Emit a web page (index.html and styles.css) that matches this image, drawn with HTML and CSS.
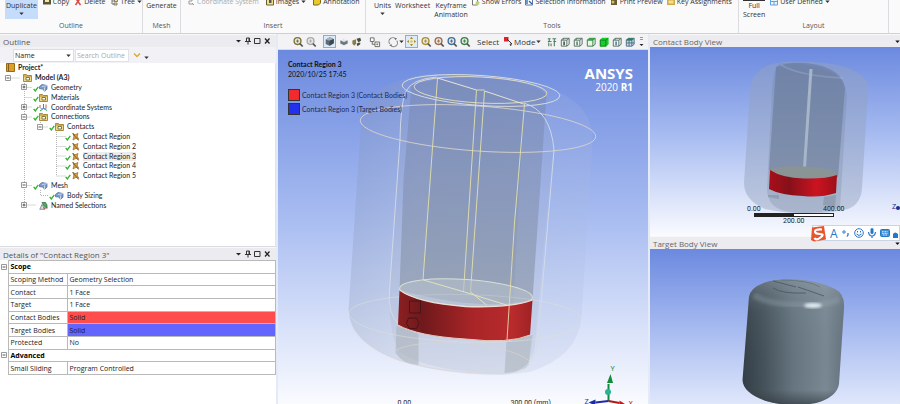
FILE: index.html
```
<!DOCTYPE html>
<html lang="en">
<head>
<meta charset="utf-8">
<title>Mechanical - Contact Region 3</title>
<link rel="stylesheet" href="styles.css">
</head>
<body>
<svg class="defs" aria-hidden="true">
  <defs>
    <symbol id="lens" viewBox="0 0 13 13"><circle cx="6" cy="5.5" r="3.7" fill="#e9e9e2" stroke="currentColor" stroke-width="1.5"/><path d="M4.300 5.500h3.400M6 3.800v3.400" stroke="currentColor"/><path d="M8.600 8.200l3 3.200" stroke="#555" stroke-width="1.800"/></symbol>
    <symbol id="cube" viewBox="0 0 13 13"><path d="M2 4L7 1.500l4.500 1.900v5.300L6.600 11.500 2 9.500z" fill="#5d6a73"/><path d="M2 4L7 1.500l4.500 1.900-4.900 2.200z" fill="#a6b2ba"/><path d="M6.600 5.600v5.900l4.900-2.800V3.400z" fill="#3c474f"/></symbol>
    <symbol id="wire" viewBox="0 0 13 13"><path d="M2.500 4.500h6v6.500h-6zM4.500 2.500h6.500v6.500l-2.500 2M2.500 4.500l2-2M8.500 4.500L11 2.500M4.500 2.500v2" fill="none" stroke="#50705c"/><path d="M5.500 6v4" stroke="currentColor" stroke-width="1.500"/></symbol>
    <symbol id="tick" viewBox="0 0 6 9"><path d="M.7 5.800L2.300 8 5.300 3.800" fill="none" stroke="#35b12f" stroke-width="1.300"/></symbol>
    <symbol id="plus" viewBox="0 0 8 8"><path d="M1.500 1.500h5v5h-5z" fill="#fff" stroke="#999"/><path d="M2.500 4h3M4 2.500v3" stroke="#333" stroke-width=".8"/></symbol>
    <symbol id="minus" viewBox="0 0 8 8"><path d="M1.500 1.500h5v5h-5z" fill="#fff" stroke="#999"/><path d="M2.500 4h3" stroke="#333" stroke-width=".8"/></symbol>
    <symbol id="folder" viewBox="0 0 9 9"><path d="M.5 1.500h3l1 1h4v6h-8z" fill="#f1da84" stroke="#927427" stroke-width=".8"/><path d="M1 3h7" stroke="#a78529"/><path d="M3 4.500h3.500v2.500H3z" fill="#fff" stroke="#655a32" stroke-width=".8"/></symbol>
    <symbol id="solid" viewBox="0 0 9 9"><path d="M.5 3.500L3 1.500l5 1v3.700L5.500 8.200 3.800 6 .5 5.700z" fill="#7f9ed0" stroke="#44618e" stroke-width=".7"/><path d="M3 3.500l5-.9M5.500 8V4.500" stroke="#e5edfa" stroke-width=".7"/></symbol>
    <symbol id="axes" viewBox="0 0 9 9"><path d="M4.500 1v4.500L8 7.500M4.500 5.500L1 8" fill="none" stroke="#31a24c"/><path d="M1 2v3M7 1.500v3.500" stroke="#c34a44" stroke-width=".9"/><path d="M1.500 5.500h6" stroke="#5787c8" stroke-width=".7"/></symbol>
    <symbol id="contact" viewBox="0 0 9 9"><path d="M2 1.500l2 1.200L7 1.500 6.300 4.200 7.800 7.500 5 6.300 2 8l.8-3.500z" fill="#d6a23d" stroke="#8a5d22" stroke-width=".6"/><path d="M1.500 1l6 7.500" stroke="#7d5019" stroke-width=".8"/></symbol>
    <symbol id="named" viewBox="0 0 9 9"><path d="M.8 8.300L3 3.500l3 4.800z" fill="#d5e2f4" stroke="#777" stroke-width=".8"/><path d="M3 1.500h3.500L8 4v3L5 5z" fill="#45b15a" stroke="#276835" stroke-width=".7"/><path d="M4 7h4.500" stroke="#c54545"/></symbol>
    <symbol id="down" viewBox="0 0 5 5"><path d="M.3 1.500h4.400L2.500 4z" fill="currentColor"/></symbol>
    <symbol id="win" viewBox="0 0 36 10"><path d="M0 4h5L2.500 6.500z" fill="#222"/><path d="M10.500 2h3v3.500h-3zM9 5.500h6M12 5.500v3M13 2v3" fill="none" stroke="#333"/><path d="M18.500 2.500h5.500v5h-5.500z" fill="none" stroke="#333"/><path d="M29 2.500l4.500 5M33.500 2.500L29 7.500" stroke="#222" stroke-width="1.300"/></symbol>
    <linearGradient id="steel"><stop offset="0" stop-color="#333e46"/><stop offset=".22" stop-color="#46535c"/><stop offset=".5" stop-color="#667580"/><stop offset=".82" stop-color="#7a8994"/><stop offset="1" stop-color="#66747f"/></linearGradient>
    <linearGradient id="shade" x1="0" y1="0" x2="0" y2="1"><stop offset="0" stop-color="#a4b1bb" stop-opacity=".4"/><stop offset=".25" stop-color="#8796a1" stop-opacity=".1"/><stop offset=".88" stop-color="#333" stop-opacity="0"/><stop offset="1" stop-color="#263038" stop-opacity=".6"/></linearGradient>
    <linearGradient id="red"><stop offset="0" stop-color="#8c1f22"/><stop offset=".18" stop-color="#6f191c"/><stop offset=".55" stop-color="#a82527"/><stop offset=".85" stop-color="#b92b2d"/><stop offset="1" stop-color="#9d2225"/></linearGradient>
    <linearGradient id="red2"><stop offset="0" stop-color="#a80f19"/><stop offset=".3" stop-color="#86101a"/><stop offset=".7" stop-color="#cb1420"/><stop offset="1" stop-color="#9d0f19"/></linearGradient>
    <linearGradient id="glass"><stop offset="0" stop-color="#7f8fae" stop-opacity=".26"/><stop offset=".3" stop-color="#a3afc4" stop-opacity=".22"/><stop offset="1" stop-color="#a9b9de" stop-opacity=".2"/></linearGradient>
    <linearGradient id="core" x1="0" y1="0" x2="0" y2="1"><stop offset="0" stop-color="#69779c" stop-opacity=".3"/><stop offset="1" stop-color="#7d8894" stop-opacity=".5"/></linearGradient>
    <filter id="soft"><feGaussianBlur stdDeviation="1.500"/></filter>
  </defs>
</svg>

<header class="ribbon">
  <section class="group group-outline">
    <div class="tools">
      <button class="big active"><span>Duplicate</span><svg class="caret"><use href="#down"/></svg></button>
      <button class="small"><svg class="ic" viewBox="0 0 8 8"><path d="M0 0h8v6.500H0z" fill="#5e5437"/><path d="M2 1h4v3H2z" fill="#f2e7ae"/></svg>Copy</button>
      <button class="small"><svg class="ic" viewBox="0 0 8 8"><path d="M1.500 0l5 7M6.500 0l-5 7" stroke="#d94a42" stroke-width="1.500"/></svg>Delete</button>
      <button class="small"><svg class="ic" viewBox="0 0 8 8"><path d="M0 1h3M2 1v5h2M2 3h3" fill="none" stroke="#777"/><path d="M4.500 1.500h3v2h-3zM4 5h3v2H4z" fill="#f1e6a0" stroke="#555" stroke-width=".7"/></svg>Tree<svg class="caret"><use href="#down"/></svg></button>
    </div>
    <h2>Outline</h2>
  </section>
  <section class="group group-mesh">
    <div class="tools"><button class="big"><span>Generate</span></button></div>
    <h2>Mesh</h2>
  </section>
  <section class="group group-insert">
    <div class="tools">
      <button class="small" disabled><svg class="ic" viewBox="0 0 8 8"><path d="M1 1h4v2H2v3h4M5 5l2 2" fill="none" stroke="#999"/></svg>Coordinate System</button>
      <button class="small"><svg class="ic" viewBox="0 0 8 8"><path d="M.5 0h7v7h-7z" fill="#efe08b" stroke="#696039"/><path d="M3 2h2.500v3H3z" fill="#555"/></svg>Images<svg class="caret"><use href="#down"/></svg></button>
      <button class="small"><svg class="ic" viewBox="0 0 8 8"><path d="M.5 0h7v5l-2 2h-5z" fill="#e8c82b" stroke="#7c6b20"/></svg>Annotation</button>
    </div>
    <h2>Insert</h2>
  </section>
  <section class="group group-tools">
    <div class="tools">
      <button class="big"><span>Units</span><svg class="caret"><use href="#down"/></svg></button>
      <button class="big"><span>Worksheet</span></button>
      <button class="big"><span>Keyframe<br>Animation</span></button>
      <button class="small"><svg class="ic" viewBox="0 0 8 8"><path d="M.5 0h5v7h-5z" fill="#fff" stroke="#777"/><circle cx="5.500" cy="5" r="2" fill="#b8d17b"/></svg>Show Errors</button>
      <button class="small"><svg class="ic" viewBox="0 0 8 8"><path d="M.5 0h7v7h-7z" fill="#fff" stroke="#5979a5"/><path d="M2 1v5M4 3l3 3" stroke="#2367aa" stroke-width="1.300"/></svg>Selection Information</button>
      <button class="small"><svg class="ic" viewBox="0 0 8 8"><path d="M1 2h6v5H1z" fill="#655d3b"/><circle cx="3" cy="4" r="1.500" fill="#d9bf4b"/></svg>Print Preview</button>
      <button class="small"><svg class="ic" viewBox="0 0 8 8"><path d="M0 1h8v6H0z" fill="#d2a948"/><path d="M1.500 2.500h5v3h-5z" fill="#f5dd93"/></svg>Key Assignments</button>
    </div>
    <h2>Tools</h2>
  </section>
  <section class="group group-layout">
    <div class="tools">
      <button class="big monitor"><span>Full<br>Screen</span></button>
      <button class="small"><svg class="ic" viewBox="0 0 8 8"><path d="M.5 0h7v7h-7zM.5 3.500h7M4 3.500V7" fill="#e9f4ff" stroke="#5fa3e0"/></svg>User Defined<svg class="caret"><use href="#down"/></svg></button>
    </div>
    <h2>Layout</h2>
  </section>
</header>

<main class="workspace">
  <aside class="left">
    <section class="panel outline">
      <div class="title"><h3>Outline</h3><svg class="win"><use href="#win"/></svg></div>
      <div class="filter">
        <div class="pick"><select aria-label="Filter by"><option>Name</option></select><svg class="caret"><use href="#down"/></svg></div>
        <input type="text" aria-label="Search Outline" placeholder="Search Outline">
        <svg class="chev" viewBox="0 0 8 6"><path d="M1 1.500L4 4.500 7 1.500" fill="none" stroke="#dcaa2f" stroke-width="1.500"/></svg>
        <svg class="caret more"><use href="#down"/></svg>
      </div>
      <div class="treebox">
        <svg class="lines" viewBox="0 0 276 147" aria-hidden="true"><path d="M8.500 15h12M24.500 20v122M24.500 24.500h8M24.500 34.500h8M24.500 44h8M24.500 54h8M24.500 122.500h8M24.500 142h12M40.500 59v4M40.500 64h8M56.500 69v44M56.500 73.500h9M56.500 83.500h9M56.500 93h9M56.500 103h9M56.500 113h9M40.500 127v5.500h8" fill="none" stroke="#b5b5b5" stroke-dasharray="1 1"/></svg>
        <ul class="tree">
          <li class="root"><svg class="ti" viewBox="0 0 9 9"><path d="M.5.500h8v8h-8z" fill="#d9a02c" stroke="#9b6a13"/><path d="M2.500 1v7" stroke="#8b5d12"/></svg><b>Project*</b></li>
          <li class="l0"><svg class="ex"><use href="#minus"/></svg><i class="tk"></i><svg class="ti"><use href="#folder"/></svg><b>Model (A3)</b></li>
          <li class="l1"><svg class="ex"><use href="#plus"/></svg><svg class="tk"><use href="#tick"/></svg><svg class="ti"><use href="#solid"/></svg><span>Geometry</span></li>
          <li class="l1"><i class="ex"></i><svg class="tk"><use href="#tick"/></svg><svg class="ti"><use href="#folder"/></svg><span>Materials</span></li>
          <li class="l1"><svg class="ex"><use href="#plus"/></svg><svg class="tk"><use href="#tick"/></svg><svg class="ti"><use href="#axes"/></svg><span>Coordinate Systems</span></li>
          <li class="l1"><svg class="ex"><use href="#minus"/></svg><svg class="tk"><use href="#tick"/></svg><svg class="ti"><use href="#folder"/></svg><span>Connections</span></li>
          <li class="l2"><svg class="ex"><use href="#minus"/></svg><svg class="tk"><use href="#tick"/></svg><svg class="ti"><use href="#folder"/></svg><span>Contacts</span></li>
          <li class="l3"><i class="ex"></i><svg class="tk"><use href="#tick"/></svg><svg class="ti"><use href="#contact"/></svg><span>Contact Region</span></li>
          <li class="l3"><i class="ex"></i><svg class="tk"><use href="#tick"/></svg><svg class="ti"><use href="#contact"/></svg><span>Contact Region 2</span></li>
          <li class="l3 selected"><i class="ex"></i><svg class="tk"><use href="#tick"/></svg><svg class="ti"><use href="#contact"/></svg><span>Contact Region 3</span></li>
          <li class="l3"><i class="ex"></i><svg class="tk"><use href="#tick"/></svg><svg class="ti"><use href="#contact"/></svg><span>Contact Region 4</span></li>
          <li class="l3"><i class="ex"></i><svg class="tk"><use href="#tick"/></svg><svg class="ti"><use href="#contact"/></svg><span>Contact Region 5</span></li>
          <li class="l1"><svg class="ex"><use href="#minus"/></svg><svg class="tk"><use href="#tick"/></svg><svg class="ti"><use href="#solid"/></svg><span>Mesh</span></li>
          <li class="l2"><i class="ex"></i><svg class="tk"><use href="#tick"/></svg><svg class="ti"><use href="#solid"/></svg><span>Body Sizing</span></li>
          <li class="l1"><svg class="ex"><use href="#plus"/></svg><i class="tk"></i><svg class="ti"><use href="#named"/></svg><span>Named Selections</span></li>
        </ul>
      </div>
    </section>
    <section class="panel details">
      <div class="title"><h3>Details of "Contact Region 3"</h3><svg class="win"><use href="#win"/></svg></div>
      <table>
        <colgroup><col class="c-gutter"><col class="c-name"><col></colgroup>
        <tr><td class="gutter"><svg class="ex"><use href="#minus"/></svg></td><th colspan="2">Scope</th></tr>
        <tr><td class="gutter"></td><td>Scoping Method</td><td>Geometry Selection</td></tr>
        <tr><td class="gutter"></td><td>Contact</td><td>1 Face</td></tr>
        <tr><td class="gutter"></td><td>Target</td><td>1 Face</td></tr>
        <tr><td class="gutter"></td><td>Contact Bodies</td><td class="v-red">Solid</td></tr>
        <tr><td class="gutter"></td><td>Target Bodies</td><td class="v-blue">Solid</td></tr>
        <tr><td class="gutter"></td><td>Protected</td><td>No</td></tr>
        <tr><td class="gutter"><svg class="ex"><use href="#minus"/></svg></td><th colspan="2">Advanced</th></tr>
        <tr><td class="gutter"></td><td>Small Sliding</td><td>Program Controlled</td></tr>
      </table>
    </section>
  </aside>

  <section class="center">
    <div class="viewbar">
      <button class="tb olive" aria-label="Zoom in"><svg><use href="#lens"/></svg></button>
      <button class="tb pale" aria-label="Zoom out"><svg><use href="#lens"/></svg></button>
      <span class="gap"></span>
      <button class="tb on" aria-label="Shaded exterior"><svg><use href="#cube"/></svg></button>
      <button class="tb" aria-label="Shaded"><svg viewBox="0 0 13 13"><path d="M2.500 5L6 4l4.500 1v3L6.500 10l-4-2z" fill="#6d7880"/><path d="M2.500 5L6 4l4.500 1-4 1.500z" fill="#e3e8ec"/></svg></button>
      <button class="tb" aria-label="Wireframe"><svg viewBox="0 0 13 13"><path d="M1.500 5l4-1.500v5l-2 2-2-2z" fill="#8b7d4a"/><path d="M6 3l4-1 1 3-3 2zM6 8l4-1v2L7 11z" fill="#4b4d43"/></svg></button>
      <span class="gap"></span>
      <button class="tb" aria-label="Body pick"><svg viewBox="0 0 13 13"><path d="M1.500 2h4v4h-4zM6.500 6.500h5v5h-5z" fill="#fff" stroke="#666"/><path d="M3.500 6v3h3" fill="none" stroke="#666"/><path d="M8 8h2v2H8z" fill="#7b8a45"/></svg></button>
      <span class="gap"></span>
      <button class="tb" aria-label="Rotate"><svg viewBox="0 0 13 13"><path d="M9.500 3.500A4 4 0 0 0 3 8.500M4 10A4 4 0 0 0 10.500 5" fill="none" stroke="#888" stroke-width="1.200"/><path d="M8 2l3 .5-2 2zM5.500 11l-3-.5 2-2z" fill="#777"/></svg></button>
      <svg class="caret"><use href="#down"/></svg>
      <button class="tb on" aria-label="Pan"><svg viewBox="0 0 13 13"><path d="M6.500 1L8.300 3.500H4.700zM6.500 12L4.700 9.500h3.600zM1 6.500l2.500-1.800v3.600zM12 6.500L9.500 4.700v3.600z" fill="#b18c19"/><circle cx="6.500" cy="6.500" r="1.500" fill="#e6c94a"/></svg></button>
      <button class="tb gold" aria-label="Zoom"><svg><use href="#lens"/></svg></button>
      <button class="tb rust" aria-label="Box zoom"><svg><use href="#lens"/></svg></button>
      <button class="tb blue" aria-label="Zoom to fit"><svg><use href="#lens"/></svg></button>
      <button class="tb green" aria-label="Magnifier"><svg><use href="#lens"/></svg></button>
      <span class="word">Select</span>
      <button class="mode"><svg viewBox="0 0 9 9"><path d="M0 0h4.500v4.500H0z" fill="#e0202a"/><path d="M3 2l5 5-2 .2L7 9" fill="none" stroke="#333"/></svg>Mode<svg class="caret"><use href="#down"/></svg></button>
      <button class="tb" aria-label="Smart select"><svg viewBox="0 0 13 13"><path d="M2 3h3M7 3h4M2 6h4M8 6h3M3.500 3v3M9 3v8M3 7v4M5.500 8v3" stroke="#4e8060" stroke-width="1.200"/></svg></button>
      <button class="tb" aria-label="Vertex"><svg><use href="#wire"/></svg></button>
      <button class="tb green" aria-label="Edge"><svg><use href="#wire"/></svg></button>
      <button class="tb green" aria-label="Face"><svg viewBox="0 0 13 13"><path d="M2.500 4.500h6V11h-6zM2.500 4.500l2-2H11V9l-2.500 2M8.500 4.500L11 2.500" fill="#e7f6e9" stroke="#377845"/><path d="M2.500 4.500l2-2H11l-2.500 2z" fill="#2cae3b"/></svg></button>
      <button class="tb" aria-label="Body"><svg viewBox="0 0 13 13"><path d="M2 4l2.500-2h7v7L9 11.500H2z" fill="#18cf2a"/><path d="M2.500 4.500h6V11h-6zM8.500 4.500L11 2.500" fill="none" stroke="#157f25"/></svg></button>
      <button class="tb blue" aria-label="Node"><svg><use href="#wire"/></svg></button>
      <button class="tb" aria-label="Element"><svg viewBox="0 0 13 13"><path d="M2.500 4.500h6V11h-6zM2.500 4.500l2-2H11V9l-2.500 2M8.500 4.500L11 2.500M2.500 7.500H11M5.500 4.500V11" fill="#cfdbea" stroke="#466b83"/><path d="M2.500 4.500l2-2H11l-2.500 2z" fill="#25824b"/></svg></button>
      <svg class="overflow" viewBox="0 0 5 11"><path d="M1 1.500h3M1 3.500h3" stroke="#999"/><path d="M.5 8h4L2.500 10z" fill="#222"/></svg>
    </div>
    <div class="view">
      <svg class="scene" viewBox="278 50 371 354" preserveAspectRatio="xMidYMid slice">
        <path d="M432 74Q372 80 362 116L349 310Q350 342 400 361Q470 381 530 372Q578 357 582 318L593 140Q592 98 540 86Q490 73 432 74z" fill="url(#glass)"/>
        <path d="M425 76Q405 80 402 110L390 300Q390 335 400 352Q430 372 505 374Q527 374 535 350L553 150Q552 110 525 103L550 98Q540 76 460 74z" fill="#9aa5b8" fill-opacity=".14"/>
        <path d="M412 85Q440 76 480 77Q540 82 547 95L533 300Q480 312 400 290L404 180z" fill="url(#core)"/>
        <path d="M437 79L524 103L514 305L424 281z" fill="#75818a" fill-opacity=".15"/>
        <path d="M397 326l-1 27q8 12 23 12V334zM507 342l26-7-4 30q-5 7-24 8z" fill="#a5aeb4" fill-opacity=".5"/>
        <g fill="none" stroke-width=".9">
          <ellipse cx="478.500" cy="128.500" rx="118" ry="22.500" transform="rotate(4 478.500 128.500)" stroke="#d6d1cc"/>
          <ellipse cx="481.500" cy="90.500" rx="79" ry="15" transform="rotate(4 481.500 90.500)" stroke="#dde1dc"/>
          <ellipse cx="481" cy="90" rx="66.500" ry="13" transform="rotate(3 481 90)" stroke="#e5dfbf"/>
          <path d="M437 77Q412 79 406 92Q401 105 400.500 140L390 290Q388 313 398 323M524 103Q551 110 554.500 150L538 345Q532 372 505 374" stroke="#d5dde4"/>
          <path d="M438 78L477 90M485 91L524 104" stroke="#f0edd4"/>
          <path d="M438 78L423.500 280M477 90L464 292M485 91L471 292M525 104L515 223M477 90h8" stroke="#e3e1ac"/>
          <path d="M349 314C350 286 575 288 583 320C570 355 350 346 349 312" stroke="#dce1d6" stroke-opacity=".6"/>
          <path d="M352 325C368 357 420 373 505 374M396 351C410 338 505 340 530 361" stroke="#ddd4cb" stroke-opacity=".7"/>
        </g>
        <ellipse cx="466.500" cy="293" rx="66.500" ry="13.500" transform="rotate(4 466.500 293)" fill="#b5c0cd" fill-opacity=".6" stroke="#d9dfd7"/>
        <path d="M424 280L465 292L507 305M471 292l16 13" fill="none" stroke="#e2e3bd"/>
        <path d="M400 290Q418 303 466 306.500Q512 308 533 300L530.500 335Q510 344 466 339Q418 336 398.500 325z" fill="url(#red)"/>
        <path d="M400 290Q418 303 466 306.500Q512 308 533 300" fill="none" stroke="#ede1d6" stroke-width="1.300"/>
        <path d="M398.500 325Q418 336 466 339Q510 344 530.500 335" fill="none" stroke="#e7c8bd"/>
        <path d="M515 223L507.500 340" stroke="#e8dba6" stroke-width=".9"/>
        <path d="M410 301h11v12h-11zM409 318h8l2.500 5-2.500 5.500h-7l-3-5z" fill="none" stroke="#451518"/>
        <g class="triad">
          <path d="M609 401V384" stroke="#118c3c" stroke-width="2"/><path d="M611 374l-3.500 9h6z" fill="#138b3b"/>
          <circle cx="608.500" cy="392" r="3" fill="#29b394"/>
          <path d="M609 401L596 402.500" stroke="#1c2ca6" stroke-width="2"/><path d="M589 402.500l7-3v6z" fill="#1c2ca6"/>
          <path d="M609 401L620 403" stroke="#b41818" stroke-width="2"/><path d="M627 405l-7-4.500v5z" fill="#c21a1a"/>
          <text x="611" y="371" fill="#24904a">Y</text><text x="585" y="404" fill="#2432b4">Z</text><text x="629" y="406" fill="#c32424">X</text>
        </g>
        <text class="scale" x="398" y="405">0.00</text><text class="scale" x="511" y="405">300.00 (mm)</text>
      </svg>
      <div class="legend">
        <strong>Contact Region 3</strong>
        <span>2020/10/25 17:45</span>
        <ul><li class="red">Contact Region 3 (Contact Bodies)</li><li class="blue">Contact Region 3 (Target Bodies)</li></ul>
      </div>
      <div class="brand"><strong>ANSYS</strong><span>2020 <b>R1</b></span></div>
    </div>
  </section>

  <aside class="right">
    <div class="title"><h3>Contact Body View</h3><svg class="caret"><use href="#down"/></svg></div>
    <div class="view contact-view">
      <svg class="scene" viewBox="650 47 250 189" preserveAspectRatio="xMidYMid slice">
        <path d="M783 62Q752 65 750 90L744 183Q744 200 765 209Q808 218 848 209Q861 204 862 188L868 90Q870 73 838 65Q812 60 783 62z" fill="#94a3bf" fill-opacity=".48"/>
        <path d="M781 63Q773 67 772 90L767 190Q768 207 785 211Q810 216 840 208L847 95Q845 80 835 74Q812 62 781 63z" fill="#74849d" fill-opacity=".28"/>
        <path d="M776 67Q795 59 822 66Q842 72 845 88L838 177Q800 185 769 170z" fill="#5b6c84" fill-opacity=".42"/>
        <path d="M811 69L804 175" stroke="#a7b5c9" stroke-width="3"/>
        <path d="M781 65Q800 76 843 78" fill="none" stroke="#afbed6" stroke-opacity=".3" stroke-width="2"/>
        <path d="M768 195h11v4l-11-2zM824 197l12-2-1 12-12-2z" fill="#7e8a99" fill-opacity=".5"/>
        <ellipse cx="803.500" cy="172.500" rx="33.500" ry="6" transform="rotate(3 803.500 172.500)" fill="#8a9495"/>
        <path d="M770 170Q782 178 804 178.500Q826 179 837 175L836 193Q820 198 803 196Q780 195 769 189z" fill="url(#red2)"/>
        <path d="M754 213h80v4h-80z" fill="#222"/><path d="M794 214h39v2h-39z" fill="#fff"/>
        <text class="scale" x="747" y="211">0.00</text><text class="scale" x="823" y="211">400.00</text><text class="scale" x="783" y="223">200.00</text>
        <text class="axis" x="892" y="209">Z</text><circle cx="898" cy="208" r="2" fill="#1d2b8f"/>
      </svg>
      <div class="ime">
        <svg class="sogou" viewBox="0 0 17 17"><path d="M2 2.500L14 1l2 13.500L4 16.500 1 15z" fill="#e9532d"/><path d="M12 4.500Q5 4 5 6.500T10 9t.500 3.500-6 .500" fill="none" stroke="#fff" stroke-width="2.200"/></svg>
        <span>A</span>
        <svg viewBox="0 0 10 10"><circle cx="3" cy="4" r="1.200" fill="none" stroke="#2478c8"/><path d="M7 5v2l-1 1.500" stroke="#2478c8" stroke-width="1.300" fill="none"/></svg>
        <svg viewBox="0 0 10 10"><circle cx="5" cy="5" r="4.300" fill="none" stroke="#2478c8"/><path d="M3.500 3v1.500M6.500 3v1.500M2.500 6q2.500 3 5 0" fill="none" stroke="#2478c8"/></svg>
        <svg viewBox="0 0 10 10"><rect x="3.500" y="0" width="3" height="6" rx="1.500" fill="#2478c8"/><path d="M1.500 4q.500 4 3.500 4t3.500-4M5 8v2" fill="none" stroke="#2478c8" stroke-width="1.200"/></svg>
        <svg viewBox="0 0 10 10"><rect x=".5" y="1.500" width="9" height="7" rx="1" fill="#4490d5" stroke="#2478c8"/><path d="M2 3.700h6M2 5.400h6M3 7h4" stroke="#fff" stroke-width=".8" stroke-dasharray="1 .5"/></svg>
        <svg viewBox="0 0 10 10"><path d="M0 6q2-3 5 0v4H0z" fill="#2478c8"/></svg>
      </div>
    </div>
    <div class="title"><h3>Target Body View</h3><svg class="caret"><use href="#down"/></svg></div>
    <div class="view target-view">
      <svg class="scene" viewBox="650 249 250 155" preserveAspectRatio="xMidYMid slice">
        <path d="M749 297Q751 284 776 280Q812 277 835 289Q845 294 844 308L839 384Q837 397 816 403Q790 408 766 401Q743 393 742.500 380z" fill="url(#steel)"/>
        <path d="M749 297Q751 284 776 280Q812 277 835 289Q845 294 844 308L839 384Q837 397 816 403Q790 408 766 401Q743 393 742.500 380z" fill="url(#shade)"/>
        <path d="M754 295Q766 304 800 305Q828 306 839 299" fill="none" stroke="#9ba9b3" stroke-opacity=".3" stroke-width="6" filter="url(#soft)"/>
        <ellipse cx="813" cy="305.500" rx="9" ry="2.500" fill="#e2edf3" filter="url(#soft)"/>
        <path d="M773 281L796 287M798 287L824 296M773 288Q782 294 806 293" fill="none" stroke="#4a565e" stroke-width=".8"/>
        <path d="M781 280Q808 280 820 287" fill="none" stroke="#5d6971" stroke-width=".6"/>
      </svg>
    </div>
  </aside>
</main>
</body>
</html>
```
FILE: styles.css
```
* { box-sizing: border-box; }
body {
  margin: 0;
  height: 100vh;
  display: flex;
  flex-direction: column;
  overflow: hidden;
  background: #e4eaf6;
  color: #333;
  font: 7px/9px "Open Sans", "Noto Sans", sans-serif;
}
h2, h3, ul { margin: 0; padding: 0; font-size: inherit; font-weight: 400; list-style: none; }
button { display: flex; align-items: center; border: 0; padding: 0; background: none; color: inherit; font: inherit; white-space: nowrap; }
svg { display: block; flex: none; }
.defs { position: absolute; width: 0; height: 0; }
.caret { width: 5px; height: 5px; }

/* Ribbon */
.ribbon { flex: none; display: flex; height: 34px; overflow: hidden; background: #fafafb; border-bottom: 1px solid #cfcfd6; }
.group { display: flex; flex-direction: column; gap: 2px; }
.group + .group { border-left: 1px solid #dcdce0; }
.group-layout { border-right: 1px solid #dcdce0; }
.group h2 { text-align: center; color: #555; }
.tools { display: flex; height: 19px; align-items: flex-start; gap: 5px; }
.group-outline { width: 142px; }
.group-outline .tools { padding-left: 5px; }
.group-mesh { width: 38px; }
.group-mesh .tools { justify-content: center; }
.group-insert { width: 185px; }
.group-insert .tools { padding-left: 6px; gap: 7px; }
.group-tools { width: 373px; }
.group-tools .tools { padding-left: 8px; gap: 4px; }
.group-layout { width: 151px; }
.group-layout .tools { padding-left: 4px; }
.big { flex-direction: column; gap: 1px; height: 19px; padding-top: 1px; text-align: center; }
.big.active { width: 33px; background: #c5ddfa; }
.monitor { border-top: 1px solid #333; padding-top: 0; }
.small { gap: 2px; margin-top: -3px; }
.small:disabled { color: #aaa; }
.ic { width: 8px; height: 8px; }

/* Workspace */
.workspace { flex: 1; min-height: 0; display: grid; grid-template-columns: 276px minmax(0, 1fr) 250px; gap: 2px; }
.left, .center, .right { display: flex; flex-direction: column; min-width: 0; min-height: 0; }
.title { flex: none; display: flex; align-items: center; justify-content: space-between; height: 13px; padding: 0 4px 0 3px; background: #ececf0; border-top: 1px solid #f8f8f8; color: #555; font-size: 8px; line-height: 11px; }
.win { width: 36px; height: 10px; }
.right .title { padding-right: 0; color: #666; }
.right .caret { color: #111; }

.outline { flex: none; background: #fff; }
.filter { display: flex; align-items: center; gap: 1px; height: 16px; padding-left: 13px; background: #f2f2f6; }
.pick { display: flex; align-items: center; width: 61px; height: 13px; padding-right: 2px; background: #fff; border: 1px solid #ddd; }
.pick select { flex: 1; min-width: 0; appearance: none; border: 0; padding: 0 1px; background: none; color: #222; font: inherit; }
.filter input { width: 54px; height: 13px; border: 1px solid #e2e2e2; padding: 0 1px; font: inherit; }
.filter input::placeholder { color: #aaa; }
.chev { width: 8px; height: 6px; margin-left: 3px; }
.more { margin: 4px 0 0 2px; }

.treebox { display: grid; padding-bottom: 36px; border-right: 1px solid #e2e2e8; }
.lines, .tree { grid-area: 1 / 1; height: 147px; width: 276px; }
.tree { display: grid; grid-auto-rows: minmax(0, 1fr); font-family: Lato, sans-serif; color: #222; }
.tree li { display: flex; align-items: center; }
.ex { width: 8px; height: 8px; }
.tk { width: 6px; height: 9px; margin-left: 5px; }
.ti { width: 9px; height: 9px; margin-right: 3px; }
.root { padding-left: 6px; }
.l0 { padding-left: 4px; }
.l1 { padding-left: 20px; }
.l2 { padding-left: 36px; }
.l3 { padding-left: 52px; }
.selected span { background: #ececec; }

.details { flex: 1; background: #fff; border-top: 1px solid #dcdce0; }
table { width: 100%; height: 115px; table-layout: fixed; border-collapse: collapse; color: #222; }
.c-gutter { width: 8px; }
.c-name { width: 59px; }
td, th { height: 12px; border: 1px solid #b9b9b9; padding: 0 2px; line-height: 9px; text-align: left; white-space: nowrap; }
th { font-weight: 700; color: #000; }
td.gutter { border-width: 0; padding: 0; }
.v-red { background: #ff4d4d; }
.v-blue { background: #6464ff; }

/* View toolbar */
.viewbar { flex: none; display: flex; align-items: center; height: 16px; padding-left: 13px; background: #f3f3f6; border-bottom: 1px solid #d9d9df; }
.tb { flex: none; width: 13px; height: 13px; }
.tb svg { width: 12px; height: 12px; margin: auto; }
.tb.on { margin: 0 1px; border: 1px solid #7eb0ea; background: #dcebfb; }
.tb.on svg { width: 11px; height: 11px; }
.gap { width: 5px; }
.olive { color: #7c7339; }
.pale { color: #aaa; }
.gold { color: #a58f35; }
.rust { color: #a06a4a; }
.blue { color: #3f6c98; }
.green { color: #37804a; }
.word { margin: 0 5px 0 6px; font-size: 8px; }
.mode { gap: 1px; margin-right: 4px; font-size: 8px; }
.mode > svg:first-child { width: 9px; height: 9px; }
.overflow { width: 5px; height: 11px; margin-left: 3px; }

/* Graphics views */
.view { position: relative; flex: 1; min-height: 0; background: linear-gradient(#6b89df, #a9bdf1 48%, #fafbff); }
.scene { width: 100%; height: 100%; }
.contact-view { flex: 189 1 0; }
.target-view { flex: 155 1 0; background: linear-gradient(#6b89df, #a5b9f0 50%, #dfe7fb); }
.scale, .axis, .triad { font: 7px Roboto, sans-serif; }
.scale { fill: #222; }
.axis { fill: #1d2b8f; }
.legend { position: absolute; left: 10px; top: 10px; display: flex; flex-direction: column; gap: 1px; color: #111; font-family: Lato, sans-serif; }
.legend ul { display: grid; gap: 2px; margin-top: 9px; }
.legend li { display: flex; align-items: center; gap: 2px; color: #222b4c; }
.legend li::before { content: ""; width: 10px; height: 10px; border: 1px solid #333; }
.legend .red::before { background: #f22a2e; }
.legend .blue::before { background: #2431ec; }
.brand { position: absolute; right: 15px; top: 16px; display: flex; flex-direction: column; align-items: flex-end; color: #fff; font-size: 10px; line-height: 12px; }
.brand strong { font-size: 15px; line-height: 15px; }
.ime { position: absolute; z-index: 1; left: 162px; right: 0; bottom: -5px; display: flex; align-items: center; gap: 3px; height: 16px; background: #fff; border: 1px solid #c9d5e4; color: #2478c8; font-size: 12px; }
.ime svg { width: 10px; height: 10px; }
.ime .sogou { width: 17px; height: 17px; margin-left: -3px; }
```
